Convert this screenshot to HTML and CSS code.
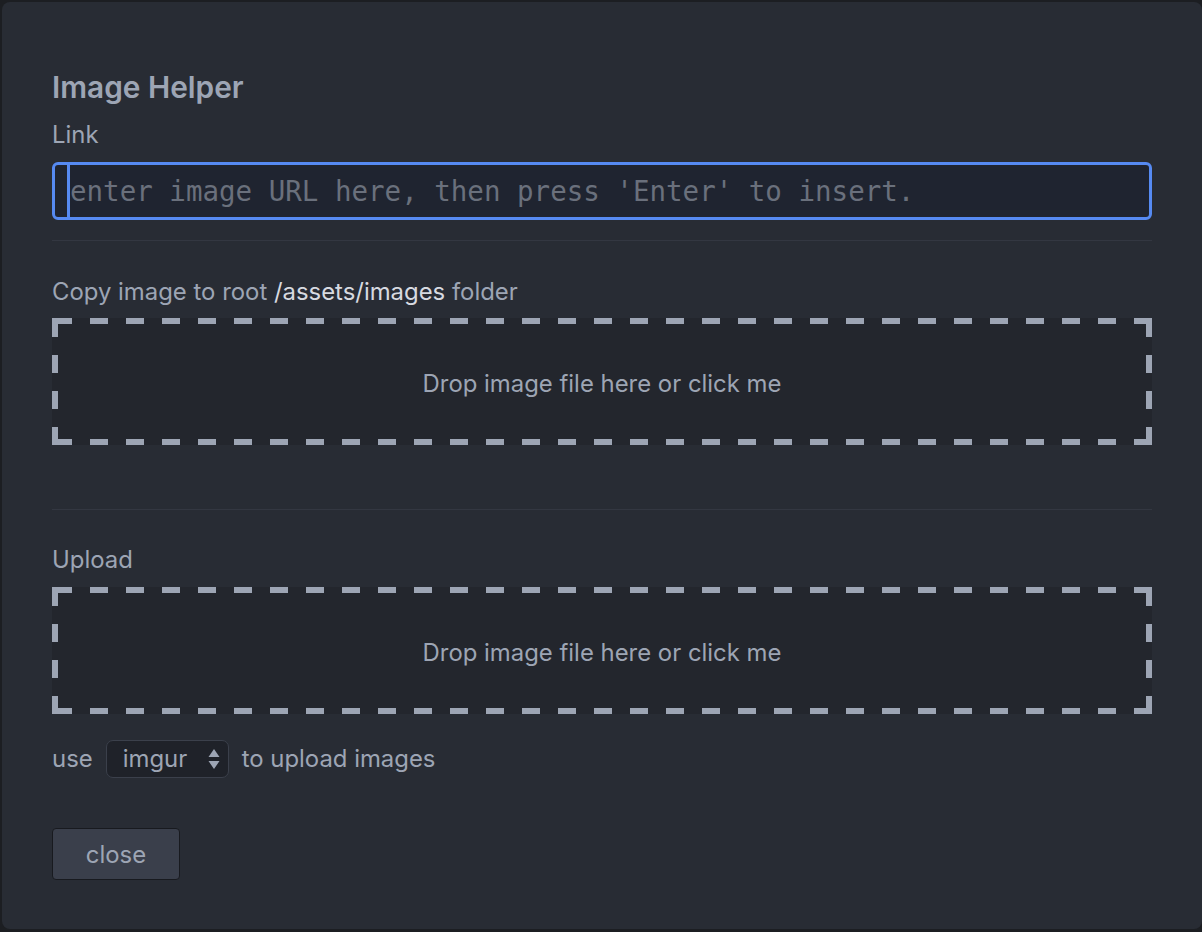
FILE: index.html
```html
<!DOCTYPE html>
<html>
<head>
<meta charset="utf-8">
<link rel="stylesheet" href="styles.css">
</head>
<body>
<div class="panel">
  <h4 class="title">Image Helper</h4>
  <div class="label label-link">Link</div>
  <div class="url-input">
    <span class="caret"></span>
    <span class="placeholder">enter image URL here, then press 'Enter' to insert.</span>
  </div>
  <div class="sep sep-1"></div>
  <div class="label label-copy">Copy image to root <span class="path">/assets/images</span> folder</div>
  <div class="dropzone dz-1">Drop image file here or click me</div>
  <div class="sep sep-2"></div>
  <div class="label label-upload">Upload</div>
  <div class="dropzone dz-2">Drop image file here or click me</div>
  <div class="use-row">
    <span>use</span>
    <div class="select">
      <span>imgur</span>
      <svg class="arrows" width="12" height="22" viewBox="0 0 12 22"><path d="M6 1 L11.5 9 H0.5 Z M6 21 L11.5 13 H0.5 Z" fill="#9da5b4"/></svg>
    </div>
    <span>to upload images</span>
  </div>
  <button class="close-btn">close</button>
</div>
</body>
</html>
```
FILE: styles.css
```css
html, body {
  margin: 0;
  padding: 0;
  background: #1c1e22;
  height: 932px;
  overflow: hidden;
}
body {
  font-family: Inter, "Noto Sans", sans-serif;
  color: #9da5b4;
}
.panel {
  box-sizing: border-box;
  margin: 2px 0 0 2px;
  width: 1200px;
  height: 927px;
  background: #282c34;
  border-radius: 8px;
  padding: 67px 50px 0 50px;
  display: flex;
  flex-direction: column;
  align-items: flex-start;
}
.title {
  margin: 0;
  font-size: 29.8px;
  line-height: 36px;
  font-weight: 600;
  color: #9da5b4;
}
.label {
  font-size: 23.9px;
  line-height: 28px;
  color: #9da5b4;
}
.label-link { margin-top: 16px; }
.path {
  color: #d7dae0;
}
.url-input {
  box-sizing: border-box;
  margin-top: 13px;
  width: 1100px;
  height: 58px;
  border: 3px solid #568af2;
  border-radius: 6px;
  background: #1f2430;
  display: flex;
  align-items: stretch;
  padding-left: 12px;
}
.caret {
  width: 3px;
  background: #568af2;
  flex: none;
}
.placeholder {
  display: flex;
  align-items: center;
  font-family: "DejaVu Sans Mono", "Liberation Mono", monospace;
  font-size: 27.5px;
  color: #6a707c;
  white-space: pre;
}
.sep {
  width: 1100px;
  height: 1px;
  background: #333741;
  flex: none;
}
.sep-1 { margin-top: 20px; }
.label-copy { margin-top: 37px; }
.dropzone {
  box-sizing: border-box;
  margin-top: 12px;
  width: 1100px;
  height: 127px;
  padding-top: 3px;
  background:
    repeating-linear-gradient(to right, transparent -16px, transparent 2px, #9da5b4 2px, #9da5b4 20px) top left / 100% 6px no-repeat,
    repeating-linear-gradient(to right, transparent -16px, transparent 2px, #9da5b4 2px, #9da5b4 20px) bottom left / 100% 6px no-repeat,
    linear-gradient(to bottom, #9da5b4 0 19px, transparent 19px 37px, #9da5b4 37px 55px, transparent 55px 73px, #9da5b4 73px 91px, transparent 91px 109px, #9da5b4 109px) top left / 6px 100% no-repeat,
    linear-gradient(to bottom, #9da5b4 0 19px, transparent 19px 37px, #9da5b4 37px 55px, transparent 55px 73px, #9da5b4 73px 91px, transparent 91px 109px, #9da5b4 109px) top right / 6px 100% no-repeat,
    #23262d;
  display: flex;
  align-items: center;
  justify-content: center;
  font-size: 23.9px;
  color: #9da5b4;
}
.dz-2 { margin-top: 13px; }
.sep-2 { margin-top: 64px; }
.label-upload { margin-top: 36px; }
.use-row {
  margin-top: 26px;
  display: flex;
  align-items: center;
  gap: 13px;
  font-size: 23.9px;
  line-height: 28px;
}
.select {
  box-sizing: border-box;
  width: 123px;
  height: 38px;
  border: 1.5px solid #3b404b;
  border-radius: 7px;
  background: #1f2229;
  display: flex;
  align-items: center;
  justify-content: space-between;
  padding: 0 8px 0 16px;
}
.arrows { display: block; }
.close-btn {
  margin-top: 50px;
  box-sizing: border-box;
  width: 128px;
  height: 52px;
  background: #3a3f4b;
  border: 1.5px solid #181a1f;
  border-radius: 4px;
  font-family: Inter, "Noto Sans", sans-serif;
  font-size: 23.9px;
  color: #9da5b4;
  padding: 0;
}
```
